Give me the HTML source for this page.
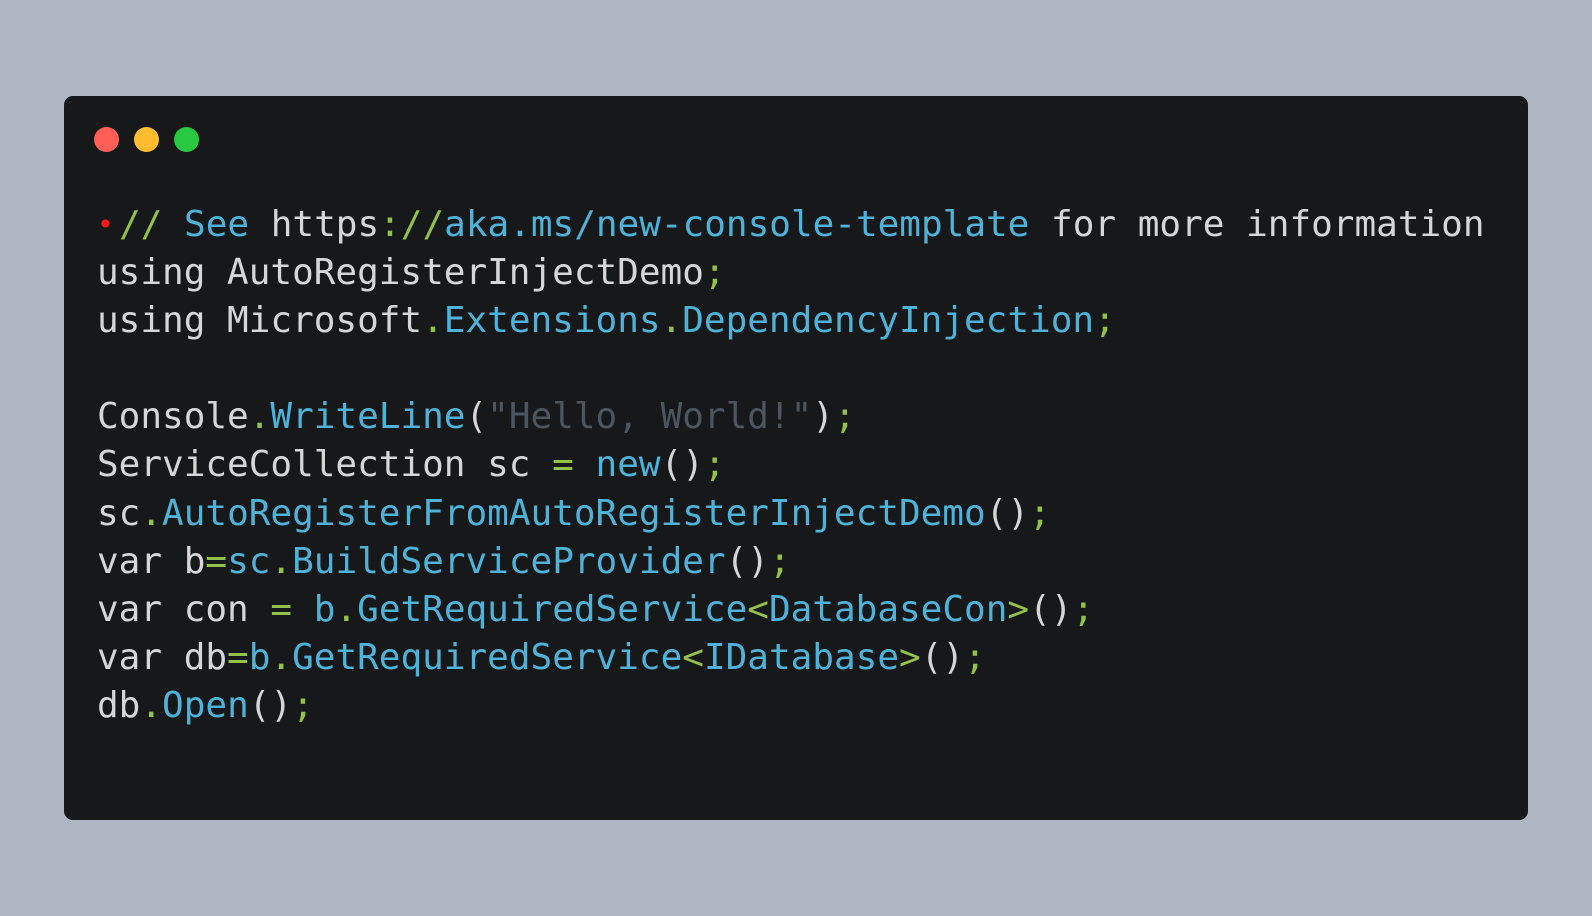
<!DOCTYPE html>
<html><head><meta charset="utf-8"><style>
html,body{margin:0;padding:0;}
body{width:1592px;height:916px;background:#adb6c1;position:relative;overflow:hidden;}
.card{position:absolute;left:64px;top:96px;width:1464px;height:724px;background:#17181a;border-radius:9px;}
.dot{position:absolute;top:127px;width:25px;height:25px;border-radius:50%;}
pre{position:absolute;left:97px;top:201px;margin:0;font-family:"DejaVu Sans Mono","Liberation Mono",monospace;font-size:36px;line-height:48.1px;color:#d6d6d6;}
.b{color:#4fb3d9}.g{color:#92c24a}.s{color:#4b5661}.r{color:#ff1a1a}
</style></head><body>
<div class="card"></div>
<div class="dot" style="left:94px;background:#ff5f57"></div>
<div class="dot" style="left:134px;background:#febc2e"></div>
<div class="dot" style="left:174px;background:#28c840"></div>
<pre><span class="r" style="position:absolute;left:0;font-size:28px">•</span><span style="margin-left:22px"></span><span class="g">//</span> <span class="b">See</span> https<span class="g">://</span><span class="b">aka.ms/new-console-template</span> for more information
using AutoRegisterInjectDemo<span class="g">;</span>
using Microsoft<span class="g">.</span><span class="b">Extensions</span><span class="g">.</span><span class="b">DependencyInjection</span><span class="g">;</span>

Console<span class="g">.</span><span class="b">WriteLine</span>(<span class="s">"Hello, World!"</span>)<span class="g">;</span>
ServiceCollection sc <span class="g">=</span> <span class="b">new</span>()<span class="g">;</span>
sc<span class="g">.</span><span class="b">AutoRegisterFromAutoRegisterInjectDemo</span>()<span class="g">;</span>
var b<span class="g">=</span><span class="b">sc</span><span class="g">.</span><span class="b">BuildServiceProvider</span>()<span class="g">;</span>
var con <span class="g">=</span> <span class="b">b</span><span class="g">.</span><span class="b">GetRequiredService</span><span class="g">&lt;</span><span class="b">DatabaseCon</span><span class="g">&gt;</span>()<span class="g">;</span>
var db<span class="g">=</span><span class="b">b</span><span class="g">.</span><span class="b">GetRequiredService</span><span class="g">&lt;</span><span class="b">IDatabase</span><span class="g">&gt;</span>()<span class="g">;</span>
db<span class="g">.</span><span class="b">Open</span>()<span class="g">;</span></pre>
</body></html>
